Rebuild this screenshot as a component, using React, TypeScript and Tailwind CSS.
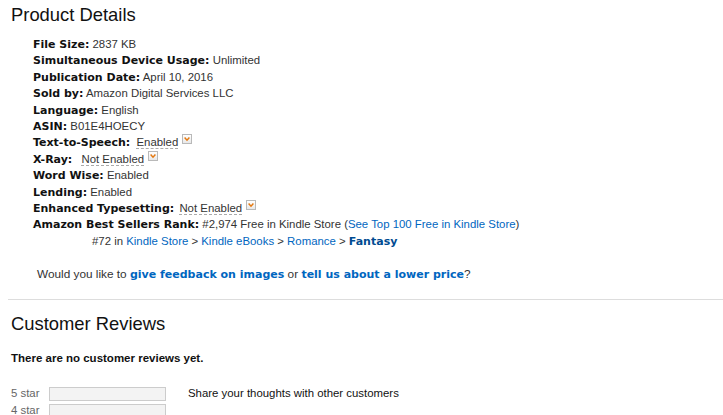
import React from "react";

const arial = "font-['Liberation_Sans',Arial,sans-serif]";
const verd = "font-['DejaVu_Sans',Verdana,sans-serif] font-bold text-[11px] text-[#111]";

function Pop() {
  return (
    <span className="inline-block align-baseline relative top-[-2px] ml-[4px] w-[10px] h-[10px] border border-[#b9b9b9] bg-gradient-to-b from-[#ffffff] to-[#e8e8e8]">
      <svg viewBox="0 0 8 8" className="absolute left-0 top-0 w-[8px] h-[8px]">
        <path d="M1.6 2.6 L4 5.2 L6.4 2.6" stroke="#e47911" strokeWidth="1.5" fill="none" />
      </svg>
    </span>
  );
}

function Row({ label, children }: { label: string; children: React.ReactNode }) {
  return (
    <div className="h-[16.4px] leading-[16.4px] whitespace-nowrap">
      <span className={verd}>{label}</span> {children}
    </div>
  );
}

export default function App() {
  return (
    <div className={`${arial} bg-white text-[#333] w-[723px] h-[415px] overflow-hidden text-[11.4px]`}>
      <div className="pl-[11px] pt-[3px]">
        <h2 className="text-[18.4px] leading-[24px] text-[#111]">Product Details</h2>
      </div>
      <div className="pl-[33px] pt-[9px]">
        <Row label="File Size:">2837 KB</Row>
        <Row label="Simultaneous Device Usage:">Unlimited</Row>
        <Row label="Publication Date:">April 10, 2016</Row>
        <Row label="Sold by:">Amazon Digital Services LLC</Row>
        <Row label="Language:">English</Row>
        <Row label="ASIN:">B01E4HOECY</Row>
        <Row label="Text-to-Speech:">
          <span className="ml-[3px] border-b border-dashed border-[#aaa]">Enabled</span>
          <Pop />
        </Row>
        <Row label="X-Ray:">
          <span className="ml-[6px] border-b border-dashed border-[#aaa]">Not Enabled</span>
          <Pop />
        </Row>
        <Row label="Word Wise:">Enabled</Row>
        <Row label="Lending:">Enabled</Row>
        <Row label="Enhanced Typesetting:">
          <span className="ml-[2px] border-b border-dashed border-[#aaa]">Not Enabled</span>
          <Pop />
        </Row>
        <Row label="Amazon Best Sellers Rank:">
          #2,974 Free in Kindle Store (<span className="text-[#0066c0]">See Top 100 Free in Kindle Store</span>)
        </Row>
        <div className="h-[16.4px] leading-[16.4px] whitespace-nowrap pl-[59px]">
          #72 in <span className="text-[#0066c0]">Kindle Store</span> &gt; <span className="text-[#0066c0]">Kindle eBooks</span> &gt;{" "}
          <span className="text-[#0066c0]">Romance</span> &gt;{" "}
          <span className="text-[#004b91] font-['DejaVu_Sans',Verdana,sans-serif] font-bold text-[11px]">Fantasy</span>
        </div>
        <div className="h-[16.4px] leading-[16.4px] mt-[17px] pl-[4px] whitespace-nowrap text-[11.8px]">
          Would you like to{" "}
          <span className="text-[#0066c0] font-['DejaVu_Sans',Verdana,sans-serif] font-bold text-[11px]">give feedback on images</span>{" "}
          or{" "}
          <span className="text-[#0066c0] font-['DejaVu_Sans',Verdana,sans-serif] font-bold text-[11px]">tell us about a lower price</span>?
        </div>
      </div>
      <div className="ml-[8px] mt-[17px] border-t border-[#ddd]" />
      <div className="pl-[11px] pt-[12px]">
        <h2 className="text-[18.4px] leading-[24px] text-[#111]">Customer Reviews</h2>
        <div className="mt-[14px] text-[11.5px] font-bold text-[#111] leading-[16px]">There are no customer reviews yet.</div>
        <div className="mt-[19px] flex">
          <div className="flex flex-col">
            <div className="flex items-center h-[17px]">
              <span className="w-[38px] text-[#666]">5 star</span>
              <div className="w-[117px] h-[14px] border border-[#ccc] bg-[#f3f3f3]" />
            </div>
            <div className="flex items-center h-[17px]">
              <span className="w-[38px] text-[#666]">4 star</span>
              <div className="w-[117px] h-[14px] border border-[#ccc] bg-[#f3f3f3]" />
            </div>
          </div>
          <div className="ml-[22px] h-[17px] leading-[17px] text-[#111]">Share your thoughts with other customers</div>
        </div>
      </div>
    </div>
  );
}
